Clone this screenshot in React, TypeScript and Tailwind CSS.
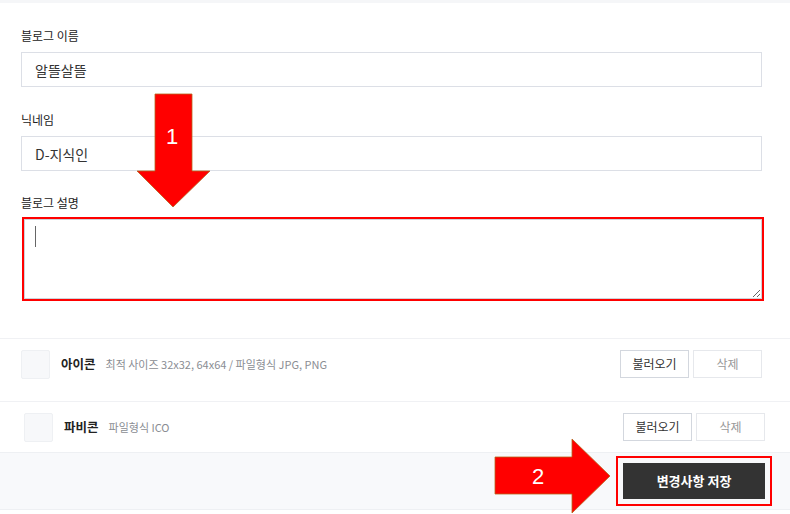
import React from "react";

const font = "font-['Noto_Sans_CJK_KR','Noto_Sans',sans-serif]";

const Field = ({ label, value, top }: { label: string; value: string; top: string }) => (
  <div className={top}>
    <label className="block text-[12px] leading-[16px] text-[#222] mb-[8px]">{label}</label>
    <input
      readOnly
      value={value}
      className="block w-full h-[35px] border border-[#dcdfe6] px-[13px] text-[14px] text-[#333] bg-white outline-none"
    />
  </div>
);

const FileRow = ({
  title,
  desc,
  className,
}: {
  title: string;
  desc: string;
  className: string;
}) => (
  <div className={`flex items-start border-t border-[#f0f1f4] ${className}`}>
    <div className="w-[29px] h-[29px] bg-[#f7f8fa] border border-[#eef0f3] rounded-[2px]" />
    <div className="flex items-center h-[29px] ml-[11px]">
      <span className="text-[12.5px] font-bold text-[#222]">{title}</span>
      <span className="ml-[10px] text-[11px] text-[#8a8d93]">{desc}</span>
    </div>
    <div className="ml-auto flex gap-[4px]">
      <button className="w-[69px] h-[28px] border border-[#d3d7de] bg-white text-[12px] text-[#333]">
        불러오기
      </button>
      <button className="w-[69px] h-[28px] border border-[#e6e8ec] bg-white text-[12px] text-[#999]">
        삭제
      </button>
    </div>
  </div>
);

export default function App() {
  return (
    <div className={`relative w-[790px] h-[514px] bg-white overflow-hidden ${font}`}>
      <div className="h-[3px] bg-[#f5f6f8]" />

      <div className="pl-[21px] pr-[28px] pt-[25px]">
        <Field label="블로그 이름" value="알뜰살뜰" top="" />
        <Field label="닉네임" value="D-지식인" top="mt-[25px]" />

        <label className="block mt-[24px] mb-[6px] text-[12px] leading-[16px] text-[#222]">블로그 설명</label>
        <div className="relative ml-[1px] mr-[-2px] border-2 border-[#ff0000]">
          <textarea className="block w-full h-[80px] border border-[#cdd3da] bg-white outline-none" />
          <span className="absolute left-[11px] top-[7px] w-[1px] h-[21px] bg-[#666]" />
        </div>
      </div>

      <div className="mt-[37px]">
        <FileRow
          title="아이콘"
          desc="최적 사이즈 32x32, 64x64 / 파일형식 JPG, PNG"
          className="h-[63px] pt-[11px] pl-[21px] pr-[28px]"
        />
        <FileRow
          title="파비콘"
          desc="파일형식 ICO"
          className="h-[51px] pt-[11px] pl-[24px] pr-[25px]"
        />
        <div className="h-[58px] bg-[#f8f9fb] border-t border-b border-[#eef0f3] flex justify-end items-start pt-[10px] pr-[25px]">
          <button className="w-[142px] h-[36px] bg-[#333333] text-white text-[13px] font-bold outline-2 outline-offset-[5px] outline-[#ff0000]">
            변경사항 저장
          </button>
        </div>
      </div>

      {/* annotation arrows */}
      <svg className="absolute left-0 top-0 pointer-events-none" width="790" height="514">
        <polygon
          points="155,94 192,94 192,171 210,171 173,207 137,171 155,171"
          fill="#ff0000"
          stroke="#b5651d"
          strokeWidth="0.8"
        />
        <polygon
          points="495,457 572,457 572,439 610,476 572,513 572,494 495,494"
          fill="#ff0000"
          stroke="#b5651d"
          strokeWidth="0.8"
        />
      </svg>
      <span className="absolute left-[166px] top-[124px] text-[22px] leading-[26px] text-white font-['Liberation_Sans',sans-serif]">
        1
      </span>
      <span className="absolute left-[532px] top-[464px] text-[22px] leading-[26px] text-white font-['Liberation_Sans',sans-serif]">
        2
      </span>
    </div>
  );
}
